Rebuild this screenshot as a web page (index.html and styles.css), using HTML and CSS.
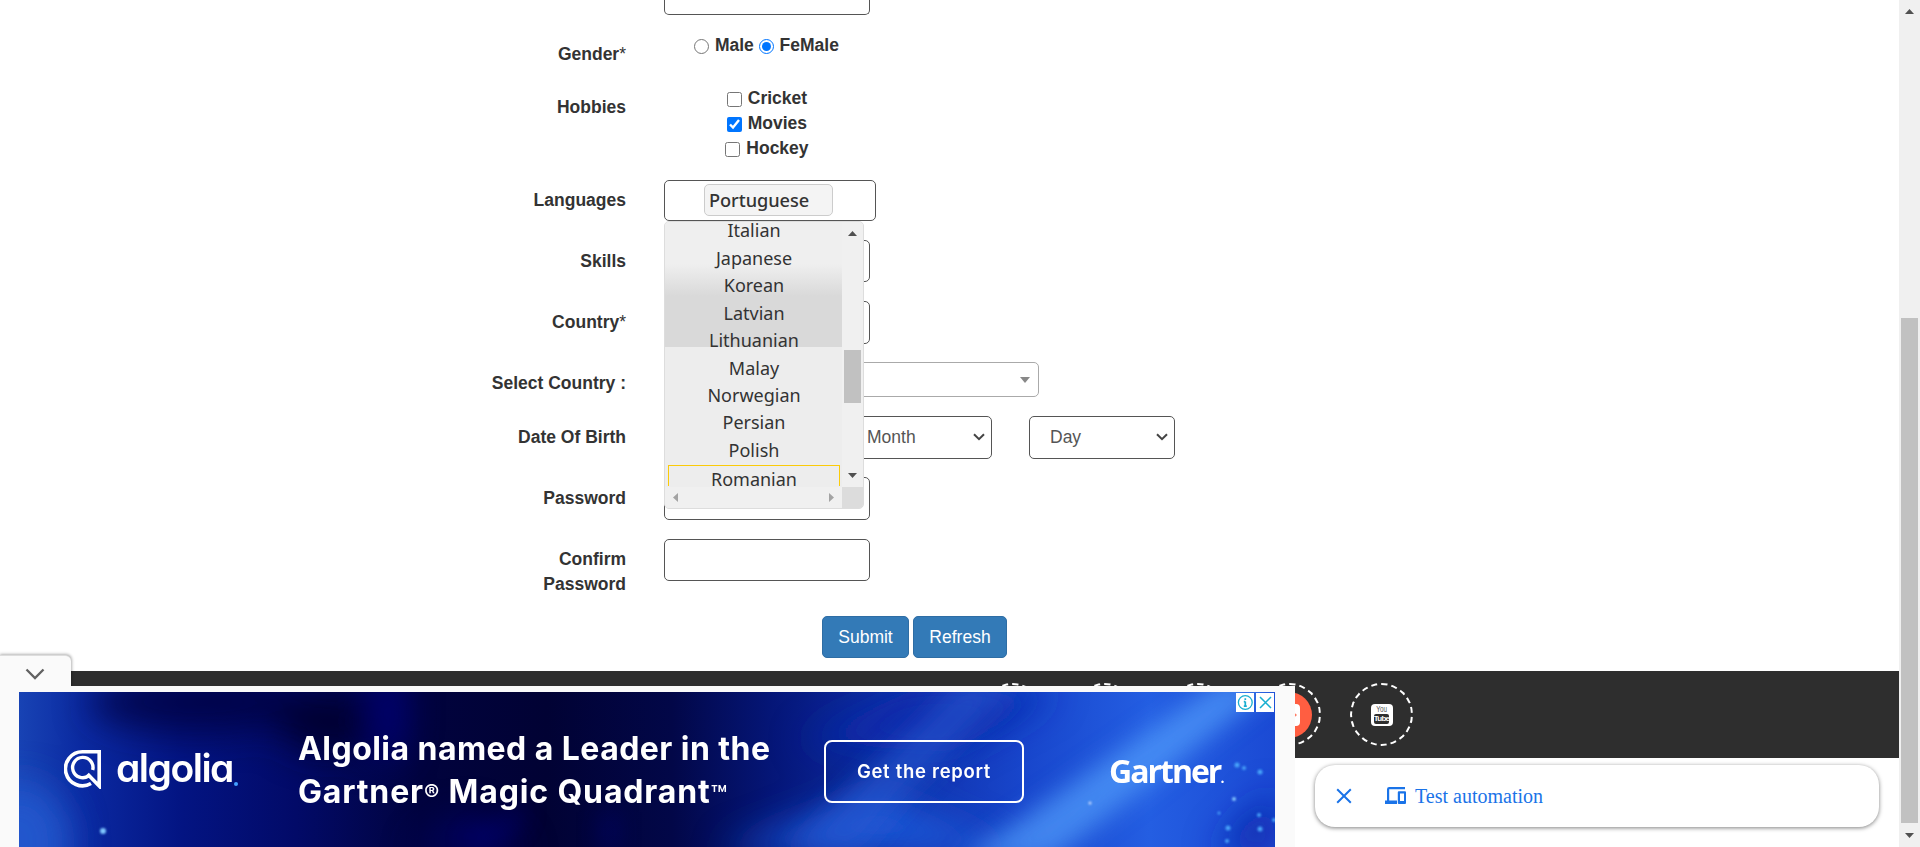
FILE: index.html
```
<!DOCTYPE html>
<html lang="en">
<head>
<meta charset="utf-8">
<title>Register</title>
<link rel="stylesheet" href="styles.css">
</head>
<body>
<div class="window">
  <div class="page">
    <form class="form">
      <div class="row row-first"><span class="label"></span><div class="box"></div></div>
      <div class="row row-gender">
        <label class="label">Gender<span class="star">*</span></label>
        <div class="choices">
          <label><input type="radio" name="g"> Male</label>
          <label><input type="radio" name="g" checked> FeMale</label>
        </div>
      </div>
      <div class="row row-hobbies">
        <label class="label">Hobbies</label>
        <div class="choices choices-list">
          <div><input type="checkbox"> Cricket</div>
          <div><input type="checkbox" checked> Movies</div>
          <div><input type="checkbox"> Hockey</div>
        </div>
      </div>
      <div class="row row-lang">
        <label class="label label-up">Languages</label>
        <div class="langs">
          <div class="box box-lang"><span class="chip">Portuguese</span></div>
          <div class="dropdown">
            <div class="list-row">
              <ul class="list">
                <li>Italian</li><li>Japanese</li><li>Korean</li><li>Latvian</li><li>Lithuanian</li><li>Malay</li><li>Norwegian</li><li>Persian</li><li>Polish</li><li class="active">Romanian</li>
              </ul>
              <div class="vbar">
                <svg class="arrow" width="9" height="5" viewBox="0 0 9 5"><path d="M0 5 4.5 0 9 5z"/></svg>
                <div class="vthumb"></div>
                <svg class="arrow" width="9" height="5" viewBox="0 0 9 5"><path d="M0 0 4.5 5 9 0z"/></svg>
              </div>
            </div>
            <div class="hbar-row">
              <div class="hbar">
                <svg class="arrow-off" width="5" height="9" viewBox="0 0 5 9"><path d="M5 0 0 4.5 5 9z"/></svg>
                <svg class="arrow-off" width="5" height="9" viewBox="0 0 5 9"><path d="M0 0 5 4.5 0 9z"/></svg>
              </div>
              <div class="corner"></div>
            </div>
          </div>
        </div>
      </div>
      <div class="row row-std"><label class="label">Skills</label><div class="box"></div></div>
      <div class="row row-std"><label class="label">Country<span class="star">*</span></label><div class="box box-tall"></div></div>
      <div class="row row-select">
        <label class="label">Select Country :</label>
        <div class="box box-combo"><svg class="caret" width="10" height="6" viewBox="0 0 10 6"><path d="M0 0h10L5 6z"/></svg></div>
      </div>
      <div class="row row-std">
        <label class="label">Date Of Birth</label>
        <div class="dates">
          <div class="select select-year"></div>
          <div class="select"><span>Month</span><svg width="12" height="8" viewBox="0 0 12 8"><path d="M1 1.2 6 6.2 11 1.2"/></svg></div>
          <div class="select"><span>Day</span><svg width="12" height="8" viewBox="0 0 12 8"><path d="M1 1.2 6 6.2 11 1.2"/></svg></div>
        </div>
      </div>
      <div class="row row-pass"><label class="label">Password</label><div class="box box-tall"></div></div>
      <div class="row row-confirm"><label class="label label-up">Confirm<br>Password</label><div class="box"></div></div>
      <div class="buttons"><button type="button" class="btn btn-submit">Submit</button><button type="button" class="btn btn-refresh">Refresh</button></div>
    </form>
    <footer class="footer">
      <div class="social"></div>
      <div class="social"></div>
      <div class="social"></div>
      <div class="social">
        <div class="disc"><svg width="22" height="22" viewBox="0 0 22 22"><rect width="22" height="22" rx="4" fill="#fff"/><path d="M14.5 11h4M16.5 9v4" stroke="#ff5e41" stroke-width="1.5"/></svg></div>
      </div>
      <div class="social">
        <div class="youtube"><span class="you">You</span><span class="tube">Tube</span></div>
      </div>
    </footer>
  </div>
  <div class="scrollbar">
    <svg class="arrow" width="9" height="5" viewBox="0 0 9 5"><path d="M0 5 4.5 0 9 5z"/></svg>
    <div class="thumb"></div>
    <svg class="arrow" width="9" height="5" viewBox="0 0 9 5"><path d="M0 0 4.5 5 9 0z"/></svg>
  </div>
</div>

<div class="tab"><svg width="20" height="12" viewBox="0 0 20 12"><path d="M1.5 1.5 10 10l8.500-8.500"/></svg></div>
<div class="ad-shell">
  <div class="ad">
    <svg class="backdrop" viewBox="0 0 1256 155" preserveAspectRatio="none">
      <defs>
        <linearGradient id="base" x1="0" x2="1" y1="0" y2="0">
          <stop offset="0" stop-color="#1843b4"/><stop offset=".05" stop-color="#0b2aa2"/><stop offset=".13" stop-color="#031482"/>
          <stop offset=".22" stop-color="#020a68"/><stop offset=".32" stop-color="#01033e"/><stop offset=".42" stop-color="#010234"/>
          <stop offset=".52" stop-color="#020748"/><stop offset=".6" stop-color="#051678"/><stop offset=".7" stop-color="#1030a8"/>
          <stop offset=".8" stop-color="#1846cc"/><stop offset=".9" stop-color="#245ee2"/><stop offset="1" stop-color="#1b4ad4"/>
        </linearGradient>
        <filter id="soft" x="-50%" y="-50%" width="200%" height="200%"><feGaussianBlur stdDeviation="18"/></filter>
        <filter id="fine" x="-50%" y="-50%" width="200%" height="200%"><feGaussianBlur stdDeviation="12"/></filter>
        <filter id="spark" x="-100%" y="-100%" width="300%" height="300%"><feGaussianBlur stdDeviation=".8"/></filter>
      </defs>
      <rect width="1256" height="155" fill="url(#base)"/>
      <g filter="url(#soft)">
        <ellipse cx="180" cy="10" rx="110" ry="30" fill="#01043e" opacity=".8"/>
        <ellipse cx="0" cy="150" rx="50" ry="60" fill="#2456cc"/>
        <ellipse cx="310" cy="30" rx="50" ry="30" fill="#010330"/>
        <ellipse cx="370" cy="20" rx="14" ry="50" fill="#03057a"/>
        <path d="M390 160l60-40 60 40z" fill="#040680" opacity=".6"/>
        <path d="M700 160l160-60 140 60z" fill="#1f56d6"/>
        <path d="M890 0h150L930 60 780 50z" fill="#0f2cac"/>
        <path d="M1256 100v60h-60z" fill="#0f28a8"/>
      </g>
      <g filter="url(#fine)">
        <path d="M940-10h60L890 100l-50 60h-70z" fill="#2858d0" opacity=".6"/>
        <path d="M1200-10h60L1030 170h-90z" fill="#4f9af8" opacity=".75"/>
        <path d="M590 120v40M500 115q-10 30-50 35" fill="none" stroke="#0509b8" stroke-width="12" opacity=".35"/>
      </g>
      <g fill="#48a4fa" filter="url(#spark)">
        <circle cx="84" cy="139" r="3" fill="#80c8ff"/><circle cx="1218" cy="73" r="2.500"/><circle cx="1225" cy="76" r="2"/><circle cx="1241" cy="80" r="2.500"/>
        <circle cx="1215" cy="107" r="2" fill="#8cf"/><circle cx="1200" cy="121" r="1.500"/><circle cx="1071" cy="111" r="1.500" fill="#cdf"/>
        <circle cx="1209" cy="136" r="2.500"/><circle cx="1241" cy="137" r="2.500"/><circle cx="1240" cy="123" r="2"/><circle cx="1208" cy="149" r="2"/><circle cx="1255" cy="128" r="2"/>
      </g>
    </svg>
    <div class="brand">
      <svg width="37" height="39" viewBox="0 0 37 39" fill="none" stroke="#fff"><path d="M27 33.500A17 17 0 1 1 18.500 1.800H35.200V36L23.500 24" stroke-width="3.600"/><path d="M24.500 26A10.200 10.200 0 1 1 28.700 20" stroke-width="3.400"/></svg>
      <span class="wordmark">algolia</span><i class="dot"></i>
    </div>
    <div class="headline"><div class="line1">Algolia named a Leader in the</div><div class="line2">Gartner<span class="reg">®</span> Magic Quadrant<span class="tm">™</span></div></div>
    <div class="cta">Get the report</div>
    <div class="gartner">Gartner<span class="gdot">.</span></div>
    <div class="adchoices">
      <svg width="18" height="19" viewBox="0 0 18 19"><rect width="18" height="19" fill="#fff"/><circle cx="9.300" cy="9.500" r="6.900" fill="none" stroke="#18aed0" stroke-width="1.300"/><path d="M9.300 8.500v5M9.300 5.200v1.900M7.800 8.700h1.500M7.800 13.200h3" stroke="#18aed0" stroke-width="1.700"/></svg>
      <svg width="18" height="19" viewBox="0 0 18 19"><rect width="18" height="19" fill="#fff"/><path d="M4 4l11 11M15 4 4 15" stroke="#18aed0" stroke-width="1.500"/></svg>
    </div>
  </div>
</div>
<div class="toast">
  <svg class="close" width="16" height="16" viewBox="0 0 16 16"><path d="M1.200 1.200 14.800 14.800M14.800 1.200 1.200 14.800"/></svg>
  <svg class="devices" width="22" height="18" viewBox="0 0 22 18" fill="#1a73e8"><path d="M4.200 2.300H20V0H4.200Q2 0 2 2.300V13.500H0V17H12V13.500H4.200z"/><path fill-rule="evenodd" d="M13.800 4.300H20q1 0 1 1V16q0 1-1 1h-6.200q-1 0-1-1V5.300q0-1 1-1zM15 6.500V14h4V6.500z"/></svg>
  <span class="toast-text">Test automation</span>
</div>
</body>
</html>
```

FILE: styles.css
```
* { box-sizing: border-box; }
body { margin: 0; height: 847px; overflow: hidden; position: relative; background: #fff; font: 17.5px/25px "Liberation Sans", Arial, sans-serif; color: #333; }
.window { display: flex; height: 847px; }
.page { width: 1899px; }
.form { height: 671px; }

/* form rows */
.row { display: flex; align-items: flex-start; }
.label { width: 626px; margin-right: 38px; padding-top: 9px; text-align: right; font-weight: 700; flex: none; }
.label-up { padding-top: 8px; }
.star { font-weight: 400; }
.row-first { height: 32px; align-items: flex-start; }
.row-first .box { height: 15px; border-top: 0; border-radius: 0 0 5px 5px; }
.row-gender { height: 53px; }
.row-gender .label { padding-top: 10px; }
.row-hobbies { height: 95px; }
.row-hobbies .label { padding-top: 10px; }
.row-lang { height: 60px; }
.row-std { height: 61px; }
.row-select { height: 54px; }
.row-pass { height: 62px; }
.row-confirm { height: 77px; }
.box { width: 206px; height: 42px; border: 1px solid #555; border-radius: 5px; background: #fff; }
.box-tall { height: 43px; }
.box-lang { width: 212px; height: 41px; padding: 3px 0 0 39px; }
.box-combo { width: 375px; height: 35px; border-color: #aaa; display: flex; justify-content: flex-end; align-items: center; padding-right: 8px; }
.caret { fill: #888; }

.choices { width: 205px; padding-top: 1px; text-align: center; font-weight: 700; white-space: nowrap; }
.choices-list { width: 206px; }
.choices input { width: 15px; height: 15px; margin: 0 1px 0 0; vertical-align: -3px; }

.chip { display: block; width: 129px; height: 32px; border: 1px solid #ccc; border-radius: 5px; background: #f4f4f4; padding-left: 4px; font: 500 18.200px/30px "Noto Sans", sans-serif; letter-spacing: -.05px; }

/* language menu */
.langs { position: relative; }
.dropdown { position: absolute; left: 0; top: 41px; width: 200px; height: 288px; border: 1px solid #ddd; border-radius: 5px; overflow: hidden; background: #efefef; z-index: 2; }
.list-row { display: flex; height: 265px; }
.list { width: 177px; height: 265px; margin: 0; padding: 0 2px 0 3px; list-style: none; overflow: hidden; text-align: center; font: 18px/27.400px "Noto Sans", sans-serif; background: linear-gradient(#efefef 42px, #d9d9d9 74px, #d9d9d9 125px, #ededed 125px); }
.list li { height: 27.400px; }
.list li:first-child { height: 23px; line-height: 17px; }
.list .active { height: 21px; border: 1px solid #fbcb09; border-bottom: 0; margin-top: 1px; line-height: 27px; }
.vbar { width: 21px; background: #f0f0f0; display: flex; flex-direction: column; align-items: center; justify-content: space-between; padding: 9px 0; }
.arrow { fill: #505050; flex: none; }
.vthumb { width: 17px; height: 53px; background: #c1c1c1; margin: 114px 0 auto; }
.hbar-row { display: flex; height: 21px; }
.hbar { width: 177px; background: #f0f0f0; display: flex; justify-content: space-between; align-items: center; padding: 0 8px; }
.arrow-off { fill: #a3a3a3; }
.corner { flex: 1; background: #dcdcdc; }

/* date of birth */
.dates { display: flex; gap: 37px; }
.select { width: 146px; height: 43px; border: 1px solid #555; border-radius: 5px; display: flex; align-items: center; justify-content: space-between; padding: 0 6px 1px 20px; color: #555; }
.select-year { width: 145px; }
.select svg { fill: none; stroke: #444; stroke-width: 2; }

.buttons { display: flex; gap: 4px; padding-left: 822px; }
.btn { height: 42px; padding: 0; border: 1px solid #2e6da4; border-radius: 5px; background: #337ab7; color: #fff; font: 17.500px "Liberation Sans", Arial, sans-serif; }
.btn-submit { width: 87px; }
.btn-refresh { width: 94px; }

.footer { height: 87px; background: #2e2e2e; display: flex; gap: 29.250px; padding: 12px 0 0 981px; }
.social { width: 63px; height: 63px; border: 2px dashed #fff; border-radius: 50%; display: flex; align-items: center; justify-content: center; }
.disc { width: 46px; height: 46px; border-radius: 50%; background: #ff5e41; display: flex; align-items: center; justify-content: center; }
.youtube { width: 22px; height: 22px; border-radius: 4px; background: #fff; display: flex; flex-direction: column; align-items: center; font-weight: 700; }
.you { font-size: 9px; line-height: 10px; transform: scaleX(.7); color: #555; font-weight: 400; }
.tube { width: 15px; height: 10px; border-radius: 2px; background: #2e2e2e; color: #fff; font-size: 8px; line-height: 10px; letter-spacing: -.7px; display: flex; justify-content: center; }

.scrollbar { width: 21px; background: #f0f0f0; display: flex; flex-direction: column; align-items: center; padding: 9px 0; }
.thumb { width: 17px; height: 505px; margin: 304px 0 auto; background: #c1c1c1; }

/* anchored advertisement */
.tab { position: absolute; left: -1px; top: 655px; width: 72px; height: 37px; border-top: 1px solid #ddd; border-radius: 0 6px 0 0; background: #fafafa; box-shadow: 1px -1px 3px rgba(0,0,0,.3); display: flex; justify-content: center; padding-top: 12px; z-index: 3; }
.tab svg { fill: none; stroke: #616161; stroke-width: 2.300; }
.ad-shell { position: absolute; left: 0; top: 686px; width: 1295px; height: 161px; background: #fafafa; padding: 6px 20px 0 19px; z-index: 4; }
.ad { position: relative; height: 155px; overflow: hidden; display: flex; color: #fff; white-space: nowrap; }
.backdrop { position: absolute; inset: 0; width: 100%; height: 100%; }
.brand, .headline, .cta, .gartner { position: relative; flex: none; }
.brand { width: 234px; margin-left: 45px; padding-top: 58px; display: flex; align-items: flex-start; }
.wordmark { margin: -4px 0 0 15px; font: 600 39px/44px Inter, sans-serif; font-feature-settings: "cv11"; letter-spacing: -1.500px; }
.dot { width: 4px; height: 4px; border-radius: 50%; background: #44a0ff; margin: 32px 0 0 1px; }
.headline { width: 507px; font: 700 32px/43px Inter, sans-serif; padding-top: 35px; }
.line1 { letter-spacing: .45px; }
.line2 { letter-spacing: .85px; }
.reg { font-size: 23px; font-weight: 500; vertical-align: 2px; }
.tm { font-size: 27px; font-weight: 500; vertical-align: -2px; }
.cta { width: 200px; height: 63px; margin-top: 48px; margin-left: 19px; border: 2px solid #fff; border-radius: 8px; text-align: center; font: 600 18.500px/58px Inter, sans-serif; letter-spacing: .7px; }
.gartner { margin-left: 85px; padding-top: 57px; font: 700 32px/44px "Open Sans", sans-serif; letter-spacing: -2px; }
.gdot { font-size: 14px; }
.adchoices { position: absolute; right: 1px; top: 1px; display: flex; gap: 2px; }

.toast { position: absolute; left: 1315px; top: 765px; width: 564px; height: 62px; border-radius: 20px; background: #fff; box-shadow: 0 1px 4px rgba(0,0,0,.5); display: flex; align-items: center; padding-left: 21px; color: #1a73e8; font: 20px/24px "Liberation Serif", "Times New Roman", serif; }
.close { fill: none; stroke: #1a73e8; stroke-width: 2; }
.devices { margin: 0 8px 0 33px; }
```
